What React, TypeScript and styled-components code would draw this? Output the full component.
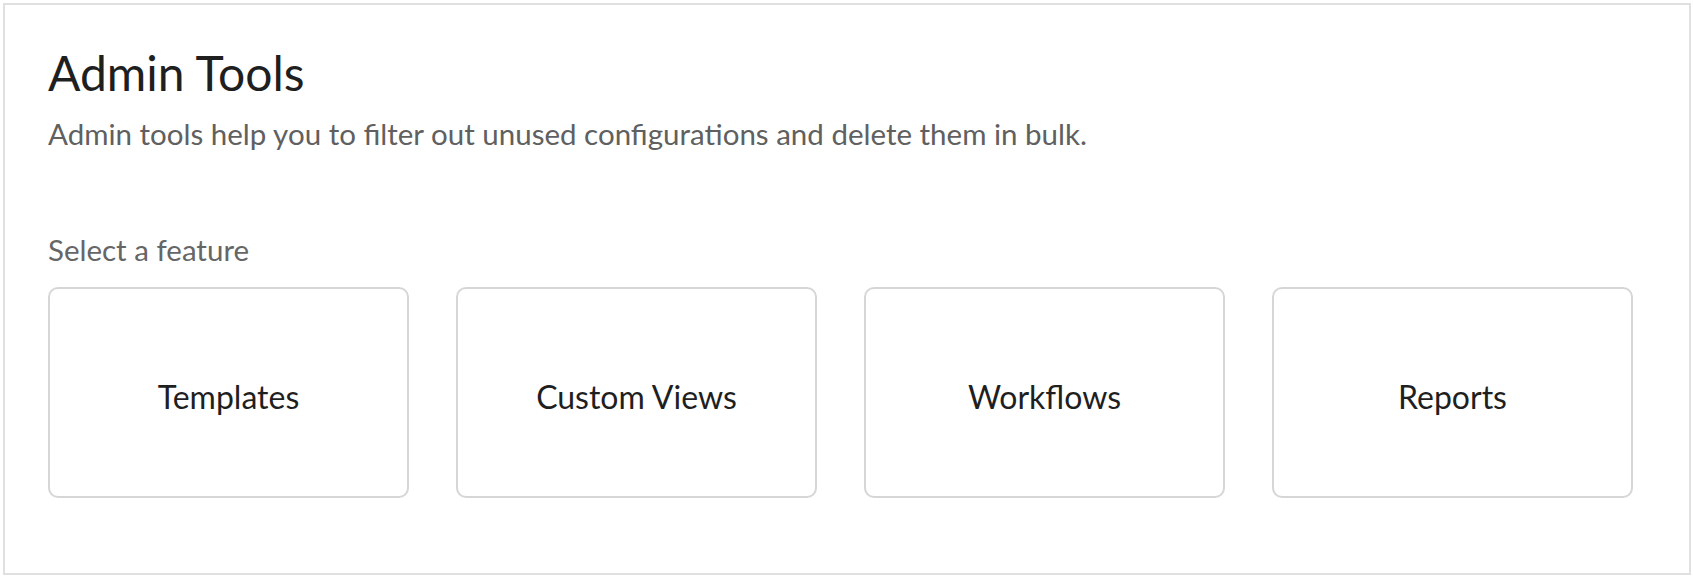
import React, { FC } from "react";
import styled, { createGlobalStyle } from "styled-components";

const GlobalStyle = createGlobalStyle`
  body {
    margin: 3px;
    background: #fff;
    font-family: Lato, "Open Sans", sans-serif;
  }
`;

const Panel = styled.div`
  box-sizing: border-box;
  height: 572px;
  border: 2px solid #e0e0e0;
  box-shadow: 0 0 2px rgba(0, 0, 0, 0.12);
  padding: 39px 0 0 43px;
`;

const Title = styled.h1`
  margin: 0;
  font-size: 48px;
  line-height: 58px;
  font-weight: 400;
  color: #1f1f1f;
`;

const Subtitle = styled.p`
  margin: 14px 0 0;
  font-size: 29.5px;
  line-height: 36px;
  color: #606060;
`;

const Label = styled.div`
  margin-top: 80px;
  font-size: 29.5px;
  line-height: 36px;
  color: #666;
`;

const CardRow = styled.div`
  display: flex;
  gap: 47px;
  margin-top: 19px;
`;

const Card = styled.button`
  box-sizing: border-box;
  width: 361px;
  height: 211px;
  padding: 7px 0 0;
  display: flex;
  align-items: center;
  justify-content: center;
  background: #fff;
  border: 2px solid #d6d6d6;
  border-radius: 10px;
  font-family: inherit;
  font-size: 32px;
  color: #1f1f1f;
  cursor: pointer;
`;

const features = ["Templates", "Custom Views", "Workflows", "Reports"];

const App: FC = () => (
  <>
    <GlobalStyle />
    <Panel>
      <Title>Admin Tools</Title>
      <Subtitle>
        Admin tools help you to filter out unused configurations and delete
        them in bulk.
      </Subtitle>
      <Label>Select a feature</Label>
      <CardRow>
        {features.map((f) => (
          <Card key={f}>{f}</Card>
        ))}
      </CardRow>
    </Panel>
  </>
);

export default App;
